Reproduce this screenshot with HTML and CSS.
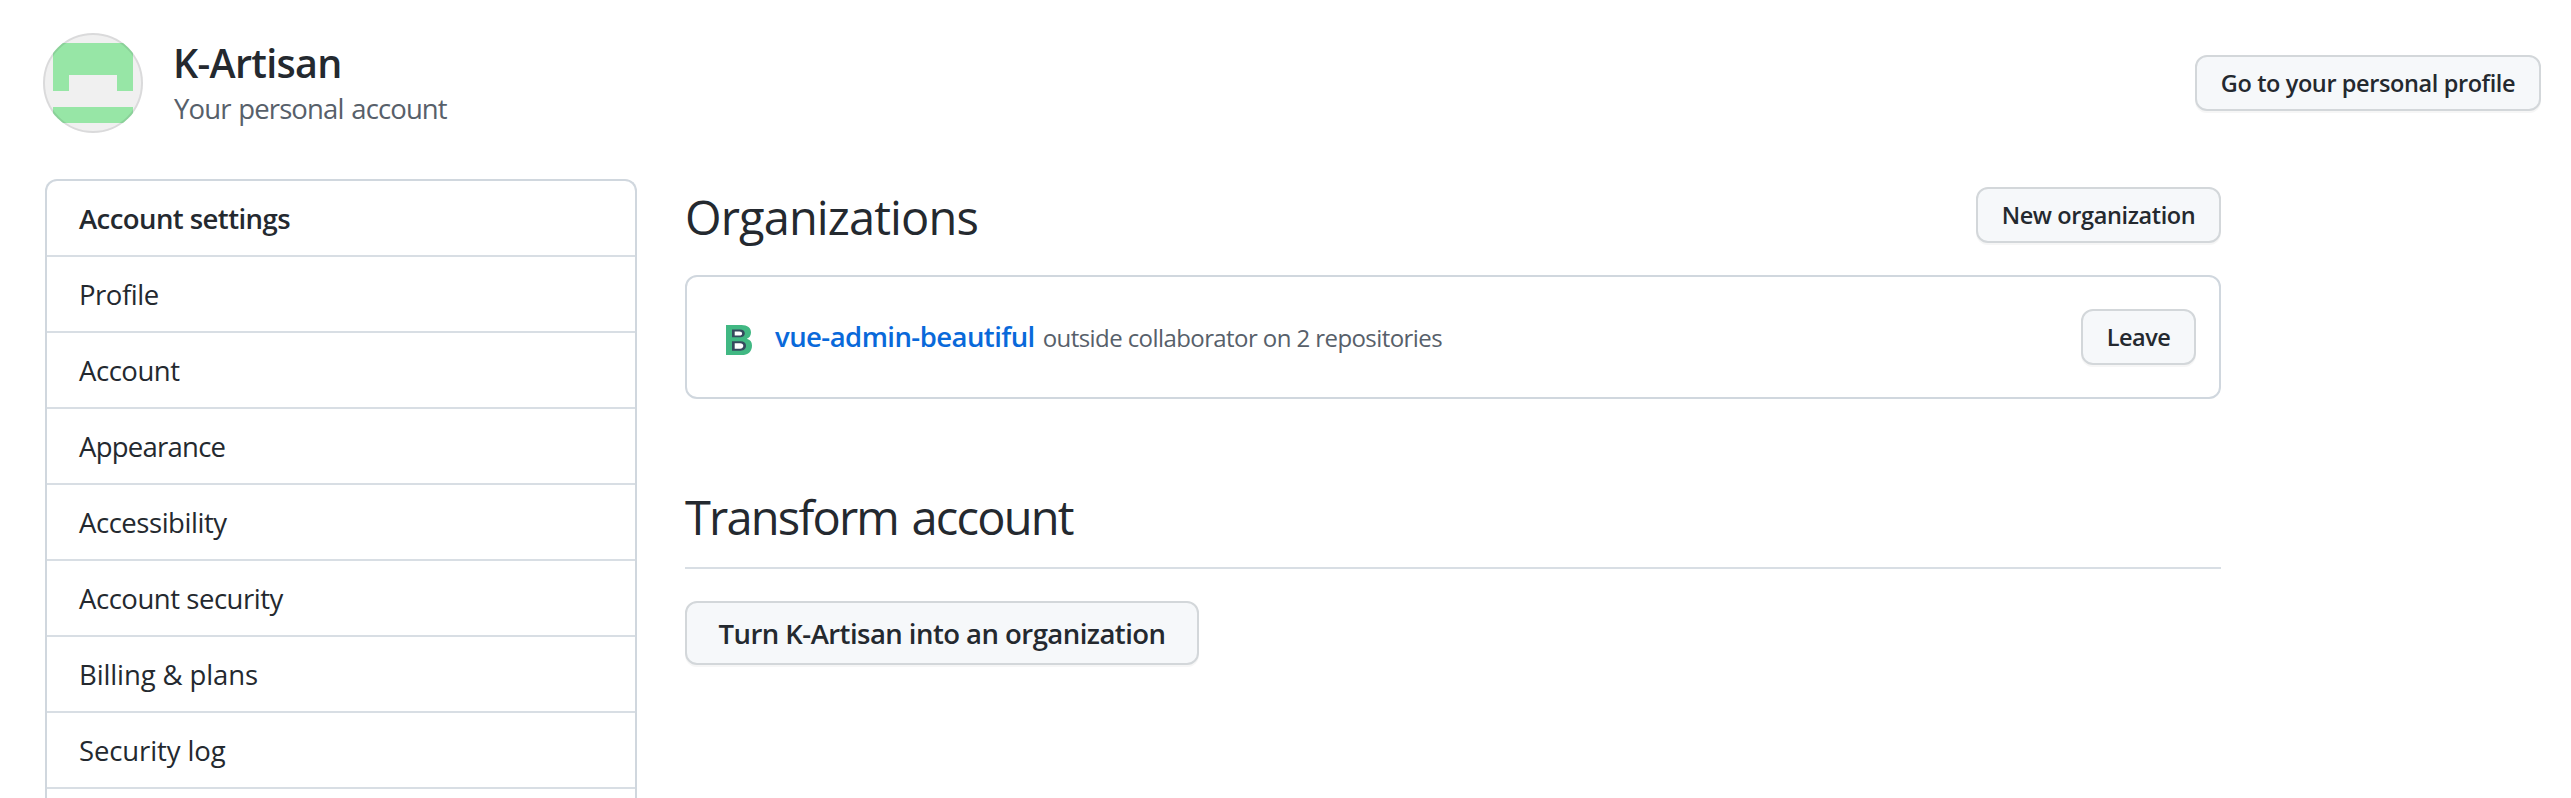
FILE: index.html
```
<!DOCTYPE html>
<html lang="en">
<head>
<meta charset="utf-8">
<title>Organizations</title>
<link rel="stylesheet" href="styles.css">
</head>
<body>
<header class="header">
  <svg class="avatar" viewBox="0 0 100 100" aria-hidden="true">
    <clipPath id="round"><circle cx="50" cy="50" r="50"/></clipPath>
    <g clip-path="url(#round)">
      <rect width="100" height="100" fill="#f0f0f0"/>
      <path d="M10 10h80v48H74V42H26v16H10zM10 74h80v16H10z" fill="#97e6a6"/>
    </g>
    <circle cx="50" cy="50" r="49" fill="none" stroke="#1b1f24" stroke-opacity=".1" stroke-width="2"/>
  </svg>
  <div class="identity">
    <h1 class="name">K-Artisan</h1>
    <p class="kind">Your personal account</p>
  </div>
  <a class="btn btn-profile">Go to your personal profile</a>
</header>
<div class="layout">
  <nav class="menu">
    <div class="menu-item menu-heading">Account settings</div>
    <a class="menu-item">Profile</a>
    <a class="menu-item">Account</a>
    <a class="menu-item tighter">Appearance</a>
    <a class="menu-item">Accessibility</a>
    <a class="menu-item">Account security</a>
    <a class="menu-item looser">Billing &amp; plans</a>
    <a class="menu-item looser">Security log</a>
  </nav>
  <main class="main">
    <div class="title-row">
      <h2 class="title">Organizations</h2>
      <a class="btn btn-new">New organization</a>
    </div>
    <div class="box">
      <svg class="logo" viewBox="0 0 26 30" aria-hidden="true">
        <path d="M0 0H15.5C21.5 0 25 2.800 25 7.400c0 3-1.600 5.300-4.200 6.300 3.400.8 5.200 3.200 5.200 6.700C26 26.600 22 30 15.500 30H0z" fill="#41b883"/>
        <path d="M6 4.500h8c3 0 4.800 1.300 4.800 3.800S17 12.300 14 12.300H6zM6 16.300h8.500c3.500 0 5.500 1.500 5.500 4.500s-2 4.900-5.500 4.900H6z" fill="#35495e"/>
        <path d="M8.700 6.400h4.700c1.800 0 2.700.7 2.700 2s-.9 2.100-2.700 2.100H8.700zM8.700 18.200H14c2.200 0 3.300.9 3.300 2.600s-1.100 2.900-3.300 2.900H8.700z" fill="#fff"/>
      </svg>
      <p class="org"><a class="org-link">vue-admin-beautiful</a><span class="org-role">outside collaborator on 2 repositories</span></p>
      <a class="btn btn-leave">Leave</a>
    </div>
    <h2 class="title title-ruled">Transform account</h2>
    <a class="btn btn-large">Turn K-Artisan into an organization</a>
  </main>
</div>
</body>
</html>
```
FILE: styles.css
```
* { box-sizing: border-box; }
body {
  margin: 0;
  height: 798px;
  background: #fff;
  color: #24292f;
  font-family: "Open Sans", "Noto Sans", sans-serif;
  font-size: 27.5px;
}
h1, h2, p { margin: 0; }
.header {
  display: flex;
  align-items: flex-start;
  height: 179px;
  padding: 33px 30px 0 43px;
}
.avatar { width: 100px; height: 100px; flex: none; }
.identity { margin-left: 30px; padding-top: 2px; }
.name { font-size: 39.5px; line-height: 56px; font-weight: 600; letter-spacing: -.7px; }
.kind { padding-left: 1px; line-height: 36px; color: #57606a; letter-spacing: -.88px; word-spacing: 1.5px; }
.btn {
  display: flex;
  align-items: center;
  justify-content: center;
  flex: none;
  height: 56px;
  border: 2px solid #d3d7da;
  border-radius: 12px;
  background: #f6f8fa;
  box-shadow: 0 2px 0 rgba(27, 31, 36, .04);
  font-size: 23.5px;
  font-weight: 600;
  letter-spacing: -.39px;
  white-space: nowrap;
}
.btn-profile { width: 346px; margin: 22px 0 0 auto; }
.layout { display: flex; align-items: flex-start; padding-left: 45px; }
.menu {
  width: 592px;
  height: 619px;
  flex: none;
  border: 2px solid #d0d7de;
  border-bottom: 0;
  border-radius: 12px 12px 0 0;
}
.menu-item {
  display: block;
  height: 76px;
  padding-left: 32px;
  border-bottom: 2px solid #d8dee4;
  line-height: 76px;
  letter-spacing: -.46px;
}
.menu-heading { font-weight: 600; letter-spacing: -.56px; }
.tighter { letter-spacing: -.75px; }
.looser { letter-spacing: -.12px; }
.main { width: 1536px; margin-left: 48px; }
.title-row { display: flex; justify-content: space-between; height: 96px; }
.title { font-size: 47px; line-height: 77px; font-weight: 400; letter-spacing: -.88px; }
.btn-new { width: 245px; margin-top: 8px; }
.box {
  display: flex;
  align-items: center;
  height: 124px;
  padding: 0 23px 0 39px;
  border: 2px solid #d0d7de;
  border-radius: 12px;
}
.logo { width: 26px; height: 30px; flex: none; margin-top: 6px; }
.org { display: flex; align-items: baseline; margin: -1px auto 0 23px; white-space: nowrap; }
.org-link { color: #0969da; font-weight: 600; letter-spacing: -.55px; }
.org-role { margin-left: 8px; color: #57606a; font-size: 24px; letter-spacing: -.58px; }
.btn-leave { width: 115px; letter-spacing: -.5px; }
.title-ruled {
  margin: 80px 0 32px;
  padding-bottom: 11px;
  border-bottom: 2px solid #d8dee4;
  letter-spacing: -1.8px;
  word-spacing: 3px;
}
.btn-large { width: 514px; height: 64px; font-size: 27.5px; letter-spacing: -.54px; }
```
